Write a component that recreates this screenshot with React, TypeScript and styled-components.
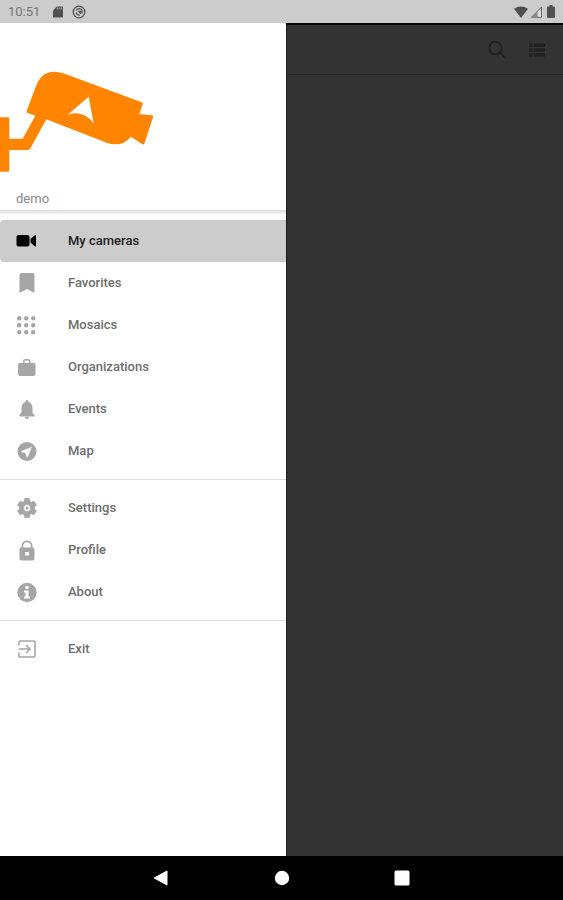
import React from "react";
import styled, { createGlobalStyle } from "styled-components";

const GlobalStyle = createGlobalStyle`
  *, *::before, *::after { box-sizing: border-box; }
  body {
    margin: 0;
    background: #000;
    font-family: Roboto, "Liberation Sans", sans-serif;
  }
`;

const Screen = styled.div`
  display: flex;
  flex-direction: column;
  min-height: 100vh;
`;

const StatusBar = styled.header`
  display: flex;
  align-items: center;
  justify-content: space-between;
  height: 23px;
  padding: 0 5px 0 8px;
  background: #cccccc;
  color: #505050;
`;

const StatusGroup = styled.div<{ $gap: number }>`
  display: flex;
  align-items: center;
  gap: ${(p) => p.$gap}px;
  svg { display: block; }
`;

const Clock = styled.time`
  margin-right: 4px;
  font-size: 13px;
  line-height: 23px;
  color: #777777;
`;

const Body = styled.div`
  display: flex;
  flex: 1;
`;

const Drawer = styled.aside`
  flex: 0 0 286px;
  background: #ffffff;
`;

const Account = styled.div`
  display: flex;
  flex-direction: column;
  height: 187px;
  padding-top: 27px;
`;

const AccountName = styled.div`
  margin-top: 9px;
  padding-left: 16px;
  font-size: 13px;
  line-height: 20px;
  color: #888888;
`;

const HeaderShadow = styled.div`
  height: 4px;
  background: linear-gradient(#dddddd, #f2f2f2);
`;

const Menu = styled.ul`
  margin: 0;
  padding: 0;
  list-style: none;
`;

const MainMenu = styled(Menu)`
  margin-top: 6px;
`;

const MenuDivider = styled.hr`
  height: 1px;
  margin: 7px 0;
  border: 0;
  background: #dcdcdc;
`;

const MenuItem = styled.button<{ $selected?: boolean }>`
  display: flex;
  align-items: center;
  gap: 29px;
  width: 100%;
  height: 42px;
  padding: 0 15px;
  border: 0;
  border-radius: 4px 0 0 4px;
  background: ${(p) => (p.$selected ? "#cccccc" : "transparent")};
  color: ${(p) => (p.$selected ? "#000000" : "#a6a6a6")};
  font-family: inherit;
  text-align: left;
  cursor: pointer;
`;

const MenuLabel = styled.span<{ $selected?: boolean }>`
  font-size: 13px;
  font-weight: 500;
  line-height: 20px;
  color: ${(p) => (p.$selected ? "#1c1c1c" : "#6e6e6e")};
`;

const Content = styled.main`
  flex: 1;
  border-left: 1px solid #1c1c1c;
  background: #333333;
`;

const AppBar = styled.div`
  display: flex;
  align-items: center;
  justify-content: flex-end;
  gap: 16px;
  height: 52px;
  padding-right: 14px;
  border-top: 2px solid #050505;
  border-bottom: 1px solid #272727;
`;

const BarButton = styled.button`
  display: flex;
  padding: 0;
  border: 0;
  background: none;
  color: #222222;
  cursor: pointer;
`;

const SystemBar = styled.nav`
  display: flex;
  align-items: center;
  justify-content: center;
  gap: 96px;
  height: 44px;
  background: #000000;
`;

const SystemButton = styled.button`
  display: flex;
  padding: 0;
  border: 0;
  background: none;
  color: #ffffff;
  cursor: pointer;
`;

type IconProps = { children: React.ReactNode; size?: number };

const Icon = ({ children, size = 24 }: IconProps) => (
  <svg width={size} height={size} viewBox="0 0 24 24" fill="currentColor" aria-hidden="true">
    {children}
  </svg>
);

const CameraIcon = () => (
  <Icon>
    <rect x="1.5" y="6" width="13" height="11.5" rx="2" />
    <path d="M21 6.3v10.9l-1 .3-4.500-4v-3.500l4.500-4z" />
  </Icon>
);

const BookmarkIcon = () => (
  <Icon>
    <path d="M6.500 2h11a2 2 0 0 1 2 2v18L12 18 4.500 22V4a2 2 0 0 1 2-2z" />
  </Icon>
);

const GridIcon = () => (
  <Icon>
    {[4.200, 11.200, 18.200].map((cy) =>
      [4.200, 11.200, 18.200].map((cx) => <circle key={`${cx}-${cy}`} cx={cx} cy={cy + 1} r="2.200" />)
    )}
  </Icon>
);

const BriefcaseIcon = () => (
  <Icon>
    <path d="M5 8h3V6.500A2.500 2.500 0 0 1 10.500 4h2.500a2.500 2.500 0 0 1 2.500 2.500V8h3a2 2 0 0 1 2 2v9a2 2 0 0 1-2 2H5a2 2 0 0 1-2-2v-9a2 2 0 0 1 2-2zm4.500 0h4.500V6.500a1 1 0 0 0-1-1h-2.500a1 1 0 0 0-1 1z" />
  </Icon>
);

const BellIcon = () => (
  <Icon>
    <path d="M12 3a1.500 1.500 0 0 1 1.500 1.500v.500c2.600.7 4 3 4 6v5l2 2v1.500h-15V17.500l2-2v-4.500c0-3 1.400-5.300 4-6V4.500A1.500 1.500 0 0 1 12 3zM10 20h4a2 2 0 0 1-4 0z" />
  </Icon>
);

const MapIcon = () => (
  <Icon>
    <path
      fillRule="evenodd"
      d="M12 3a9.500 9.500 0 1 1 0 19 9.500 9.500 0 0 1 0-19zM17 7.700 6.500 12v.9l4 1.300 1.300 4h.9z"
    />
  </Icon>
);

const GearIcon = () => (
  <Icon>
    <path
      fillRule="evenodd"
      d="m9.800 2.500-.5 2.800-1.700 1L5 5.300 2.500 9.300l2.200 1.400v2.600l-2.200 1.400 2.500 4 2.600-1 1.700 1 .5 2.800h4.400l.5-2.800 1.700-1 2.600 1 2.500-4-2.200-1.400v-2.600l2.200-1.400-2.500-4-2.600 1-1.700-1-.5-2.800zM12 8.500a3.500 3.500 0 1 1 0 7 3.500 3.500 0 0 1 0-7z"
      stroke="currentColor"
      strokeWidth=".8"
      strokeLinejoin="round"
    />
    <circle cx="12" cy="12" r="1.500" />
  </Icon>
);

const LockIcon = () => (
  <Icon>
    <path
      fillRule="evenodd"
      d="M6.500 9.500V8a5.500 5.500 0 0 1 11 0v1.500a2 2 0 0 1 2 2v9a2 2 0 0 1-2 2h-11a2 2 0 0 1-2-2v-9a2 2 0 0 1 2-2zm1.700 0h7.600V8a3.800 3.800 0 0 0-7.600 0zM10 14v3.500h4V14z"
    />
  </Icon>
);

const InfoIcon = () => (
  <Icon>
    <circle cx="12" cy="12.500" r="9.700" />
    <path fill="#fff" d="M10.500 6h3v3h-3zM9 10.500h4.500v6H15v2H9v-2h1.500v-4H9z" />
  </Icon>
);

const ExitIcon = () => (
  <Icon>
    <g fill="none" stroke="currentColor" strokeWidth="1.600">
      <path d="M4 8.500V5.200A1.200 1.200 0 0 1 5.200 4h13.600A1.200 1.200 0 0 1 20 5.200v13.600a1.200 1.200 0 0 1-1.200 1.200H5.200A1.200 1.200 0 0 1 4 18.800v-3.300M3.500 12h11.500M11 8l4 4-4 4" />
    </g>
  </Icon>
);

const Logo = () => (
  <svg width="180" height="130" viewBox="0 0 540 390" role="img" aria-label="Security camera">
    <path
      fill="#ff8400"
      d="M0 202H24Q28 202 28 206V266H68L106 197L83 189Q79 187 80 183L108 108Q124 65 162 65Q174 65 190 70L425 157Q429 159 428 163L418 192L456 196Q461 197 459 202L433 281Q431 285 426 282L393 260Q375 283 345 283Q335 283 322 279L139 208L90 297Q88 300 84 300H28V361Q28 365 24 365H0Z"
    />
    <path fill="#fff" d="M266 140L281 220Q250 179 203 194Z" />
  </svg>
);

type Entry = { label: string; icon: React.ReactNode; selected?: boolean };

const primary: Entry[] = [
  { label: "My cameras", icon: <CameraIcon />, selected: true },
  { label: "Favorites", icon: <BookmarkIcon /> },
  { label: "Mosaics", icon: <GridIcon /> },
  { label: "Organizations", icon: <BriefcaseIcon /> },
  { label: "Events", icon: <BellIcon /> },
  { label: "Map", icon: <MapIcon /> },
];

const secondary: Entry[] = [
  { label: "Settings", icon: <GearIcon /> },
  { label: "Profile", icon: <LockIcon /> },
  { label: "About", icon: <InfoIcon /> },
];

const session: Entry[] = [{ label: "Exit", icon: <ExitIcon /> }];

const Entries = ({ items }: { items: Entry[] }) => (
  <>
    {items.map(({ label, icon, selected }) => (
      <li key={label}>
        <MenuItem type="button" $selected={selected} aria-current={selected ? "page" : undefined}>
          {icon}
          <MenuLabel $selected={selected}>{label}</MenuLabel>
        </MenuItem>
      </li>
    ))}
  </>
);

export default function App() {
  return (
    <Screen>
      <GlobalStyle />
      <StatusBar>
        <StatusGroup $gap={9}>
          <Clock>10:51</Clock>
          <svg width="10" height="12" viewBox="0 0 10 12" fill="currentColor" aria-hidden="true">
            <path d="M4 .5h5a1 1 0 0 1 1 1v9a1 1 0 0 1-1 1H1a1 1 0 0 1-1-1v-6z" />
            <path stroke="#ccc" strokeWidth=".8" d="M4.300 1.500v2M6.300 1.500v2M8.300 1.500v2" />
          </svg>
          <svg width="14" height="14" viewBox="0 0 14 14" fill="none" stroke="currentColor" aria-hidden="true">
            <circle cx="7" cy="7" r="5.800" strokeWidth="1.300" />
            <path d="M4 5.500A3.500 3.500 0 0 1 10 5v3.500M4 7.500A3.300 3.300 0 0 0 8 10" strokeWidth="1.200" />
            <path d="M5.500 6 9.500 5.500 9 9.500z" fill="currentColor" stroke="none" />
          </svg>
        </StatusGroup>
        <StatusGroup $gap={2}>
          <svg width="14" height="12" viewBox="0 0 14 12" fill="currentColor" aria-hidden="true">
            <path d="M0 2.800Q7-2 14 2.800L7 12z" />
          </svg>
          <svg width="13" height="12" viewBox="0 0 13 12" aria-hidden="true">
            <path d="M1.500 11.300 11.500 1v10.300z" fill="#dcdcdc" stroke="#666" />
            <path d="M1 11.500 7.500 5v6.500z" fill="#888" />
          </svg>
          <svg width="13" height="13" viewBox="0 0 13 13" fill="currentColor" aria-hidden="true">
            <path d="M4.500 0h3v1.500H9a1 1 0 0 1 1 1V12a1 1 0 0 1-1 1H3a1 1 0 0 1-1-1V2.500a1 1 0 0 1 1-1h1.500z" />
          </svg>
        </StatusGroup>
      </StatusBar>

      <Body>
        <Drawer>
          <Account>
            <Logo />
            <AccountName>demo</AccountName>
          </Account>
          <HeaderShadow />
          <nav aria-label="Main">
            <MainMenu>
              <Entries items={primary} />
            </MainMenu>
            <MenuDivider />
            <Menu>
              <Entries items={secondary} />
            </Menu>
            <MenuDivider />
            <Menu>
              <Entries items={session} />
            </Menu>
          </nav>
        </Drawer>
        <Content>
          <AppBar>
            <BarButton type="button" aria-label="Search">
              <Icon>
                <g fill="none" stroke="currentColor" strokeWidth="1.700">
                  <circle cx="10.500" cy="10" r="6.300" />
                  <path d="m15 14.500 5.500 5.500" strokeWidth="2" />
                </g>
              </Icon>
            </BarButton>
            <BarButton type="button" aria-label="List view">
              <Icon>
                <path d="M4 5.500h3.500V9H4zM8.800 5.500H20V9H8.800zM4 10.300h3.500v3.500H4zM8.800 10.300H20v3.500H8.800zM4 15.100h3.500v3.500H4zM8.800 15.100H20v3.500H8.800z" />
              </Icon>
            </BarButton>
          </AppBar>
        </Content>
      </Body>

      <SystemBar aria-label="System">
        <SystemButton type="button" aria-label="Back">
          <Icon>
            <path d="M4.200 12 17 5v14z" stroke="currentColor" strokeLinejoin="round" />
          </Icon>
        </SystemButton>
        <SystemButton type="button" aria-label="Home">
          <Icon>
            <circle cx="12" cy="12" r="7.200" />
          </Icon>
        </SystemButton>
        <SystemButton type="button" aria-label="Recent apps">
          <Icon>
            <rect x="4.500" y="4.500" width="15" height="15" rx="1.500" />
          </Icon>
        </SystemButton>
      </SystemBar>
    </Screen>
  );
}
